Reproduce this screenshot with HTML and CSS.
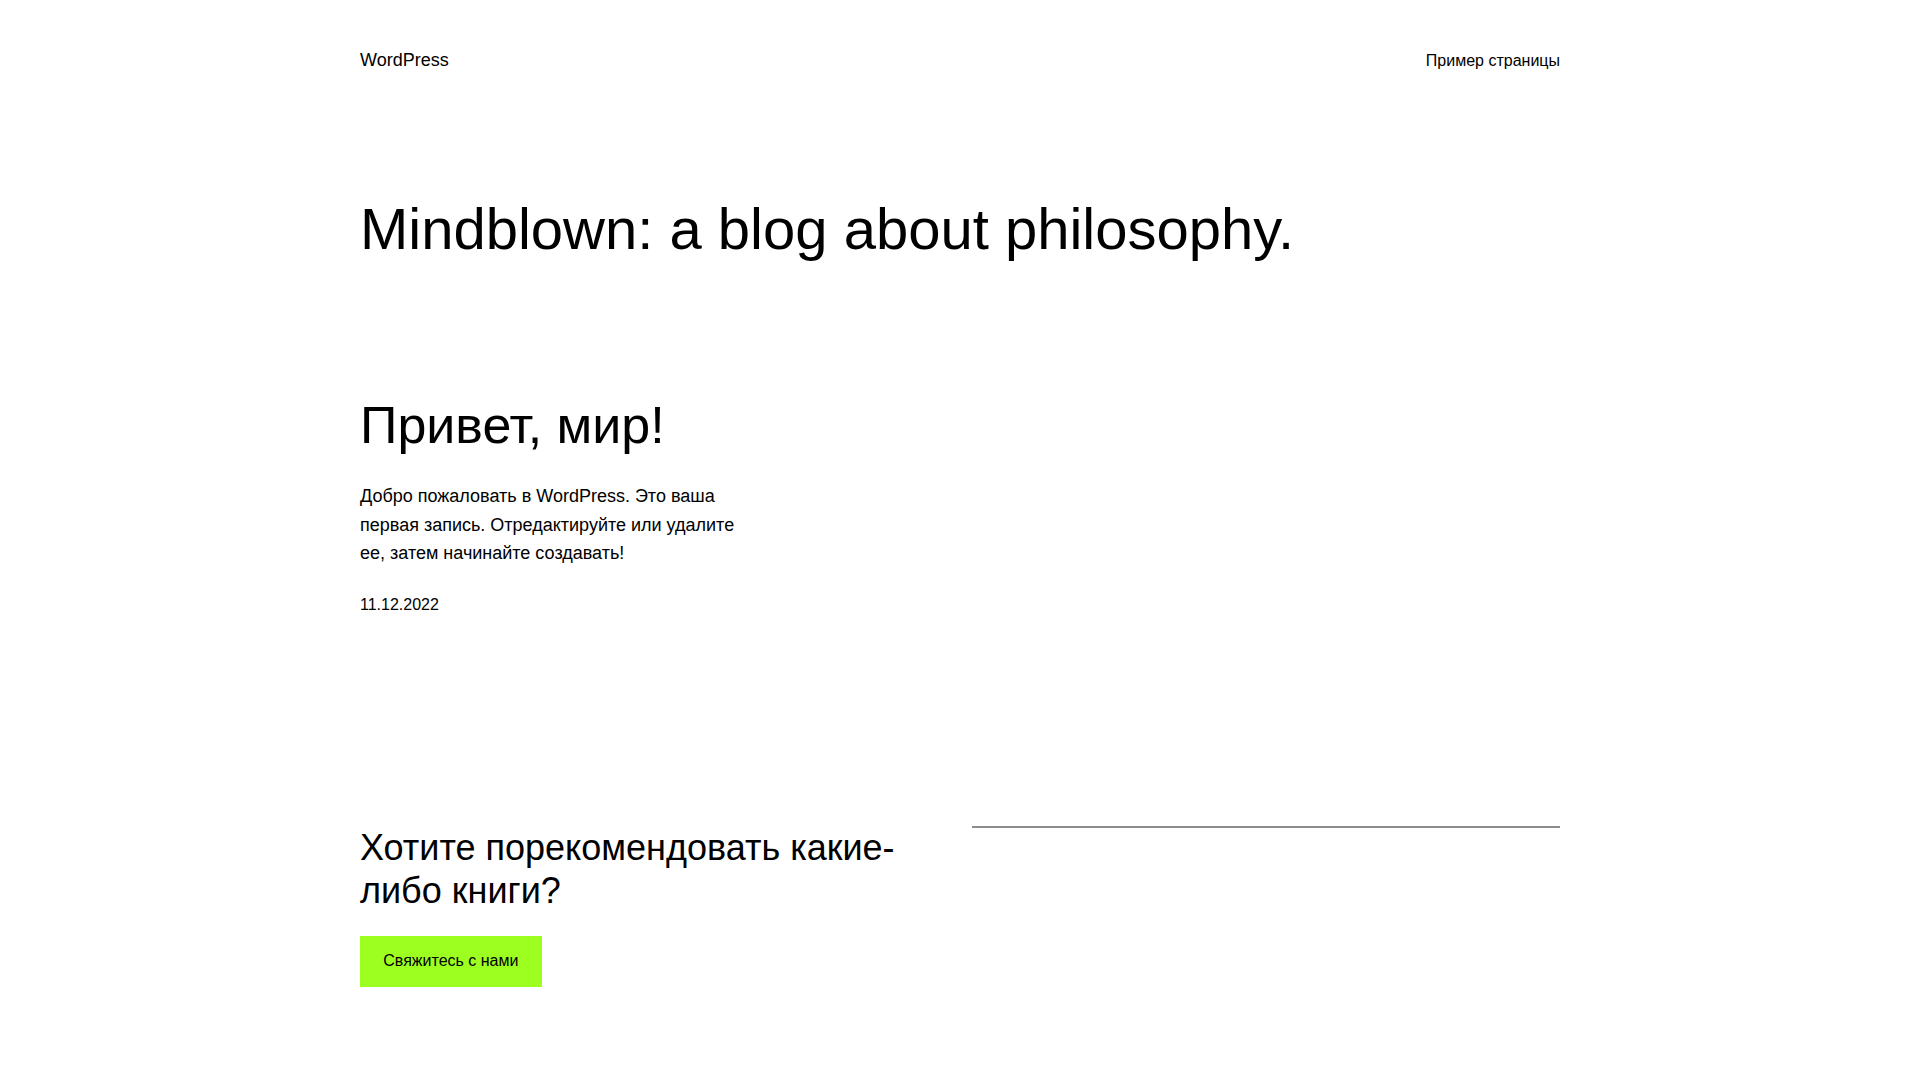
FILE: index.html
```html
<!DOCTYPE html>
<html lang="ru">
<head>
<meta charset="utf-8">
<title>WordPress</title>
<link rel="stylesheet" href="styles.css">
</head>
<body>
<div class="wrap">
  <header class="site-header">
    <a class="site-title" href="#">WordPress</a>
    <nav class="site-nav"><a href="#">Пример страницы</a></nav>
  </header>
  <main>
    <h1 class="tagline">Mindblown: a blog about philosophy.</h1>
    <div class="posts">
      <article class="post">
        <h2 class="post-title">Привет, мир!</h2>
        <p class="post-excerpt">Добро пожаловать в WordPress. Это ваша первая запись. Отредактируйте или удалите ее, затем начинайте создавать!</p>
        <time class="post-date">11.12.2022</time>
      </article>
    </div>
    <section class="cta">
      <div class="cta-left">
        <h2 class="cta-title">Хотите порекомендовать какие-либо книги?</h2>
        <a class="btn" href="#">Свяжитесь с нами</a>
      </div>
      <div class="cta-right">
        <hr class="sep">
      </div>
    </section>
  </main>
</div>
</body>
</html>
```

FILE: styles.css
```css
html, body {
  margin: 0;
  padding: 0;
  background: #ffffff;
}
body {
  font-family: "Liberation Sans", Arial, sans-serif;
  color: #000000;
  font-size: 18px;
  line-height: 1.6;
}
a {
  color: #000000;
  text-decoration: none;
}
.wrap {
  width: 1200px;
  margin: 0 auto;
}
.site-header {
  display: flex;
  justify-content: space-between;
  align-items: center;
  padding-top: 46px;
}
.site-title {
  font-size: 18px;
  line-height: 28.8px;
}
.site-nav {
  font-size: 16px;
  line-height: 25.6px;
}
.tagline {
  margin: 119px 0 0;
  font-size: 58px;
  line-height: 1.2;
  font-weight: 400;
}
.posts {
  display: grid;
  grid-template-columns: repeat(3, 1fr);
  gap: 24px;
  margin-top: 131px;
}
.post-title {
  margin: 0;
  font-size: 52px;
  line-height: 1.2;
  font-weight: 400;
}
.post-excerpt {
  margin: 25px 0 0;
  font-size: 18px;
  line-height: 28.8px;
}
.post-date {
  display: block;
  margin-top: 24px;
  font-size: 16px;
  line-height: 25.6px;
}
.cta {
  display: grid;
  grid-template-columns: 1fr 1fr;
  gap: 24px;
  margin-top: 208px;
}
.cta-title {
  margin: 0;
  font-size: 36px;
  line-height: 1.2;
  font-weight: 400;
}
.btn {
  display: inline-block;
  margin-top: 23.5px;
  padding: 12.7px 23.3px;
  background: #9dff20;
  font-size: 16px;
  line-height: 25.6px;
}
.sep {
  margin: 0;
  border: 0;
  border-top: 2px solid #8c8c8c;
  height: 0;
}
```
